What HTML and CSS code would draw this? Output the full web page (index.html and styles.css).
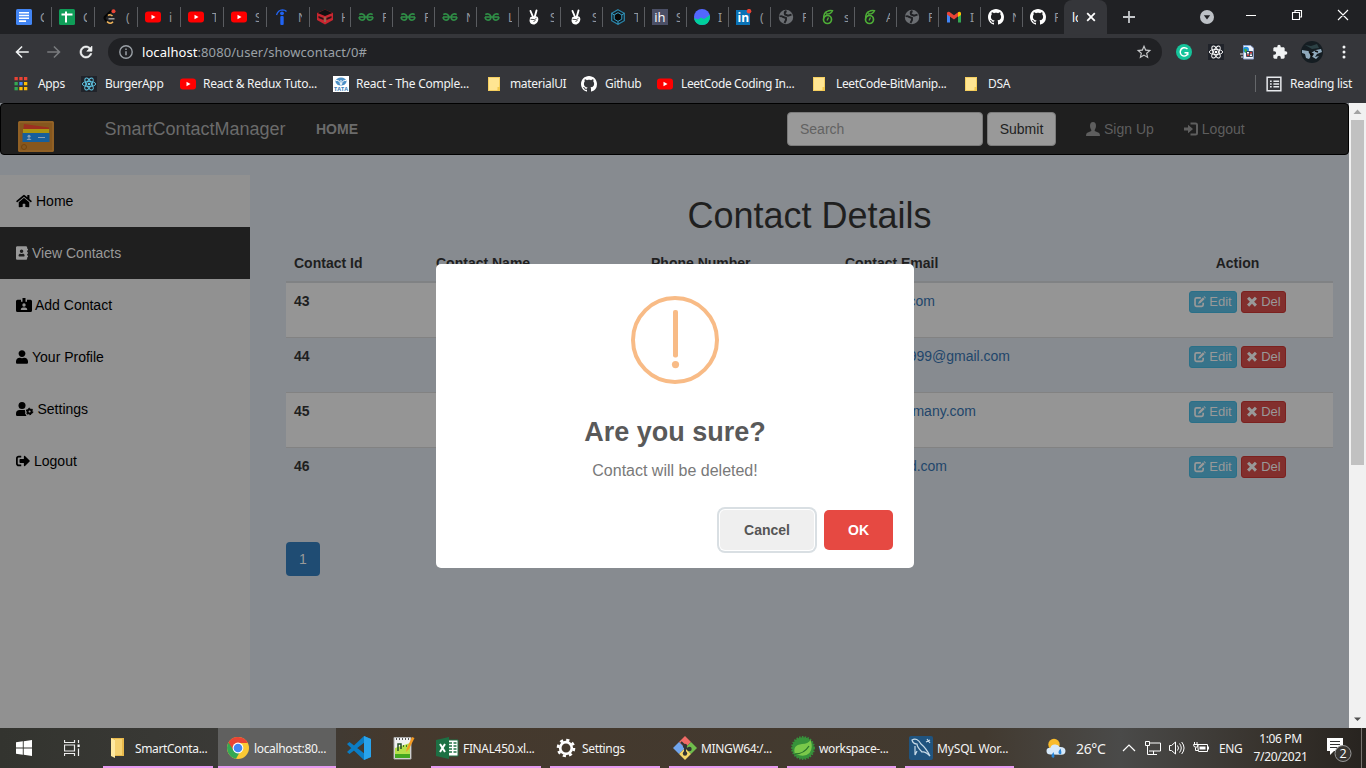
FILE: index.html
```html
<!DOCTYPE html>
<html lang="en">
<head>
<meta charset="utf-8">
<title>Contact Details</title>
<link rel="stylesheet" href="styles.css">
</head>
<body>
<svg class="defs" aria-hidden="true">
  <symbol id="docs" viewBox="0 0 16 16"><rect width="16" height="16" rx="1.5" fill="#4285f4"/><path d="M3 3.7h10M3 6.5h10M3 9.3h10M3 12.1h7" stroke="#fff" stroke-width="1.6"/></symbol>
  <symbol id="sheets" viewBox="0 0 16 16"><rect width="16" height="16" rx="1.5" fill="#0f9d58"/><path d="M2.500 5.600h11M7 2.500v11" stroke="#fff" stroke-width="2"/></symbol>
  <symbol id="leet" viewBox="0 0 16 16"><path d="M9.500 1.500L3.200 7.500Q1.800 9 3.200 10.500L5 13" fill="none" stroke="#050505" stroke-width="2"/><path d="M6 6.500Q8 4.700 10.500 7M5 12.500Q8 16 11 12.700" fill="none" stroke="#f0b45a" stroke-width="1.600"/><path d="M6.500 9.800h6" stroke="#aaa" stroke-width="1.400"/><circle cx="11.500" cy="2.200" r="2" fill="#ea4335"/></symbol>
  <symbol id="yt" viewBox="0 0 16 16"><rect y="2.500" width="16" height="11" rx="3" fill="#f00"/><path d="M6.500 5.700v4.600l4-2.300z" fill="#fff"/></symbol>
  <symbol id="indeed" viewBox="0 0 16 16"><rect x="6.300" y="7" width="3.400" height="9" rx="1" fill="#2164f3"/><circle cx="8" cy="4.300" r="1.900" fill="#2164f3"/><path d="M2.500 6Q4 1 8.500.8q2.500 0 4 1.700" fill="none" stroke="#2164f3" stroke-width="1.300"/></symbol>
  <symbol id="ninja" viewBox="0 0 16 16"><path d="M8 .5L16 4v7l-8 4.500L0 11V4z" fill="#c92630"/><path d="M8 .5L15.500 4 8 7 .5 4z" fill="#111"/><path d="M1.500 7l5 2v2L1.500 9zM14.500 7l-5 2v2l5-2z" fill="#2c1416"/><path d="M8 8v5" stroke="#69a06a"/></symbol>
  <symbol id="gfg" viewBox="0 0 16 16"><path d="M1 8h14" stroke="#2f8d46" stroke-width="1.600"/><path d="M1.300 5.600Q3 4.300 5 5.200q2 1 1.900 3Q6.800 11 4 11.200 1.300 11 1.100 8M14.700 5.600q-1.700-1.300-3.700-.4-2 1-1.900 3 .1 2.800 2.900 3 2.700-.2 2.900-3.200" fill="none" stroke="#2f8d46" stroke-width="1.600"/></symbol>
  <symbol id="hand" viewBox="0 0 16 16"><path d="M4.500 2L7 8M10.500 1.500L8.700 8" stroke="#fff" stroke-width="1.900" stroke-linecap="round"/><path d="M4 8.500Q7 6.500 11 7.500q2 1.500 1 4.500-1 3-3.500 3.500-4 .5-5-3.500z" fill="#fff"/><path d="M4.500 10.300l4 .3 2-1.300M7.500 12.500l2-1" fill="none" stroke="#222" stroke-width=".8"/></symbol>
  <symbol id="hex" viewBox="0 0 16 16"><path d="M8 .7l6.300 3.600v7.400L8 15.300l-6.300-3.600V4.300z" fill="#111b22" stroke="#2a83a7" stroke-width="1.300"/><path d="M8 3.700l3.800 2.200v4.300L8 12.400l-3.800-2.200V5.900zM1.700 4.300l2.500 1.600M14.300 4.300l-2.500 1.600M8 12.400v2.900" fill="#090909" stroke="#3aa0c8"/></symbol>
  <symbol id="ih" viewBox="0 0 16 16"><path d="M0 0h16v16H0z" fill="#4b4f66"/><text x="2.300" y="12.700" class="ico-text" font-size="13" fill="#fff">ih</text></symbol>
  <symbol id="wave" viewBox="0 0 16 16"><circle cx="8" cy="8" r="8" fill="#5367ff"/><path d="M0 9l4 1.500 3-2 3 1.500 6-4Q16.500 16 8 16 1 15.500 0 9z" fill="#00d09c"/></symbol>
  <symbol id="linkedin" viewBox="0 0 16 16"><path d="M0 1h14v15H0z" fill="#0a72b5"/><text x="1.600" y="13.300" class="ico-text" font-weight="bold" font-size="12" fill="#fff">in</text><circle cx="13" cy="2.200" r="2.300" fill="#ea4335"/></symbol>
  <symbol id="globe" viewBox="0 0 16 16"><circle cx="8" cy="8" r="7.200" fill="#6b6e72"/><path d="M1.500 7.500q2-1 3.500.5l3 1v2l-1.500 3M8.500 2Q6 3 7 5.500l3 1.200 3.500-1" fill="none" stroke="#202124" stroke-width="1.900"/></symbol>
  <symbol id="lime" viewBox="0 0 16 16"><circle cx="7.500" cy="10.500" r="4" fill="none" stroke="#4eae37" stroke-width="1.700"/><path d="M3.700 9.500Q3.500 4 7 2.500q2.500-1.500 5.500-.7Q11 5.500 6 5M8.500 8.500L7 11.500" fill="none" stroke="#4eae37" stroke-width="1.400"/></symbol>
  <symbol id="gmail" viewBox="0 0 16 16"><path d="M1 4v9.500h3V7" fill="#4285f4"/><path d="M12 7v6.500h3V4" fill="#34a853"/><path d="M1 3.700Q2 2 3.600 3L8 6.300 12.400 3v4L8 10.400 1 5.500z" fill="#ea4335"/><path d="M12 3.300q2-1.200 3 .7v2l-3 2z" fill="#fbbc04"/></symbol>
  <symbol id="github" viewBox="0 0 16 16"><path fill="#fff" d="M8 0C3.580 0 0 3.580 0 8c0 3.540 2.290 6.530 5.470 7.590.4.070.55-.17.55-.38 0-.19-.01-.82-.01-1.490-2.010.37-2.530-.49-2.690-.94-.09-.23-.48-.94-.82-1.130-.28-.15-.68-.52-.01-.53.63-.01 1.080.58 1.230.82.72 1.210 1.870.87 2.330.66.07-.52.28-.87.51-1.070-1.780-.2-3.640-.89-3.640-3.950 0-.87.31-1.590.82-2.150-.08-.2-.36-1.020.08-2.120 0 0 .67-.21 2.200.82.64-.18 1.320-.27 2-.27s1.360.09 2 .27c1.530-1.040 2.200-.82 2.200-.82.44 1.100.16 1.920.08 2.120.51.56.82 1.270.82 2.150 0 3.070-1.870 3.750-3.650 3.950.29.25.54.73.54 1.480 0 1.070-.01 1.930-.01 2.200 0 .21.15.46.55.38A8.010 8.010 0 0016 8c0-4.420-3.580-8-8-8z"/></symbol>
  <symbol id="react" viewBox="0 0 16 16"><path d="M0 0h16v16H0z" fill="#20232a"/><g fill="none" stroke="currentColor" stroke-width=".9"><ellipse cx="8" cy="8" rx="6.700" ry="2.600"/><ellipse cx="8" cy="8" rx="6.700" ry="2.600" transform="rotate(60 8 8)"/><ellipse cx="8" cy="8" rx="6.700" ry="2.600" transform="rotate(120 8 8)"/></g><circle cx="8" cy="8" r="1.300" fill="currentColor"/></symbol>
  <symbol id="folder" viewBox="0 0 16 16"><path d="M1 1h12v14H1z" fill="#f5cf60"/><path d="M2 2h10v9l-1.500 3H2z" fill="#ffe592"/><path d="M10.500 11h2.500v4h-2.500z" fill="#f2c94e"/></symbol>
  <symbol id="edit" viewBox="0 0 14 14"><path d="M8 2.200H3Q1.200 2.200 1.200 4v6.300q0 1.700 1.800 1.700h6q1.700 0 1.700-1.700V8" fill="none" stroke="currentColor" stroke-width="2"/><path d="M10.500 1.500l2 2-4.800 4.800-3 1 1-3zM11.200.8l.7-.7 2 2-.7.7z" fill="currentColor"/></symbol>
  <symbol id="cross" viewBox="0 0 14 14"><path d="M3.700.8L7 4.100 10.300.8l2.500 2.500L9.500 6.600l3.300 3.300-2.500 2.500L7 9.100l-3.300 3.300-2.500-2.500 3.300-3.300L1.200 3.300z" fill="currentColor"/></symbol>
</svg>

<header class="tabs">
  <div class="tab w43"><svg><use href="#docs"/></svg><span>C</span></div>
  <div class="tab w43"><svg><use href="#sheets"/></svg><span>C</span></div>
  <div class="tab w43"><svg><use href="#leet"/></svg><span>(</span></div>
  <div class="tab w43"><svg><use href="#yt"/></svg><span>i</span></div>
  <div class="tab w43"><svg><use href="#yt"/></svg><span>T</span></div>
  <div class="tab w43"><svg><use href="#yt"/></svg><span>S</span></div>
  <div class="tab w43"><svg><use href="#indeed"/></svg><span>N</span></div>
  <div class="tab w41"><svg><use href="#ninja"/></svg><span>H</span></div>
  <div class="tab"><svg><use href="#gfg"/></svg><span>F</span></div>
  <div class="tab"><svg><use href="#gfg"/></svg><span>F</span></div>
  <div class="tab"><svg><use href="#gfg"/></svg><span>N</span></div>
  <div class="tab"><svg><use href="#gfg"/></svg><span>L</span></div>
  <div class="tab"><svg><use href="#hand"/></svg><span>S</span></div>
  <div class="tab"><svg><use href="#hand"/></svg><span>S</span></div>
  <div class="tab"><svg><use href="#hex"/></svg><span>T</span></div>
  <div class="tab"><svg><use href="#ih"/></svg><span>S</span></div>
  <div class="tab"><svg><use href="#wave"/></svg><span>I</span></div>
  <div class="tab"><svg><use href="#linkedin"/></svg><span>(</span></div>
  <div class="tab"><svg><use href="#globe"/></svg><span>F</span></div>
  <div class="tab"><svg><use href="#lime"/></svg><span>s</span></div>
  <div class="tab"><svg><use href="#lime"/></svg><span>A</span></div>
  <div class="tab"><svg><use href="#globe"/></svg><span>F</span></div>
  <div class="tab"><svg><use href="#gmail"/></svg><span>I</span></div>
  <div class="tab"><svg><use href="#github"/></svg><span>N</span></div>
  <div class="tab last"><svg><use href="#github"/></svg><span>F</span></div>
  <div class="tab-active"><span>lo</span><svg viewBox="0 0 10 10"><path d="M1.200 1.200l7.600 7.600M8.800 1.200l-7.600 7.600" stroke="#fff" stroke-width="1.800"/></svg></div>
  <svg class="new-tab" viewBox="0 0 14 14"><path d="M7 1v12M1 7h12" stroke="#c4c7ca" stroke-width="1.800"/></svg>
  <svg class="tab-search" viewBox="0 0 14 14"><circle cx="7" cy="7" r="7" fill="#bdc1c6"/><path d="M3.800 5.300h6.400L7 9.500z" fill="#202124"/></svg>
  <svg class="win-buttons" viewBox="0 0 110 14"><path d="M0 7.500h10M92 2l10 10M102 2L92 12M46.500 4.500h7v7h-7zM49 4V2.500h6.500V9H54" fill="none" stroke="#fff" stroke-width="1.100"/></svg>
</header>

<div class="toolbar">
  <svg viewBox="0 0 24 24"><path fill="#f1f3f4" d="M21 11H7.200l5.600-5.600L11.400 4l-8.200 8 8.200 8 1.400-1.400L7.200 13H21z"/></svg>
  <svg viewBox="0 0 24 24"><path fill="#797b7e" d="M3 11h13.800l-5.600-5.600L12.600 4l8.200 8-8.200 8-1.400-1.400 5.600-5.600H3z"/></svg>
  <svg viewBox="0 0 24 24"><path fill="#f1f3f4" stroke="#f1f3f4" stroke-width=".8" d="M17.650 6.350C16.200 4.900 14.210 4 12 4c-4.420 0-7.990 3.580-7.990 8s3.570 8 7.990 8c3.730 0 6.840-2.550 7.730-6h-2.080c-.82 2.330-3.040 4-5.650 4-3.310 0-6-2.690-6-6s2.690-6 6-6c1.660 0 3.140.69 4.220 1.780L13 11h7V4z"/></svg>
  <div class="omnibox">
    <svg viewBox="0 0 14 14"><circle cx="7" cy="7" r="6.200" fill="none" stroke="#9aa0a6" stroke-width="1.400"/><path d="M7 6.200v4M7 3.500v1.500" stroke="#9aa0a6" stroke-width="1.500"/></svg>
    <p class="url"><b>localhost</b>:8080/user/showcontact/0#</p>
    <svg class="star" viewBox="1 1 22 22"><path fill="#c6c8ca" d="M22 9.240l-7.190-.62L12 2 9.190 8.630 2 9.240l5.460 4.730L5.820 21 12 17.270 18.180 21l-1.630-7.030zM12 15.400l-3.760 2.270 1-4.280-3.320-2.880 4.380-.38L12 6.100l1.710 4.040 4.380.38-3.320 2.880 1 4.280z"/></svg>
  </div>
  <div class="extensions">
    <svg viewBox="0 0 16 16"><circle cx="8" cy="8" r="8" fill="#15c39a"/><path d="M11.500 5Q9.800 3.300 7.500 3.800 4.500 4.500 4.200 8q.3 3.600 3.800 4.100 3.400-.2 3.800-3.300H8.500M11.800 8.800v2.500" fill="none" stroke="#fff" stroke-width="1.400"/></svg>
    <svg class="white"><use href="#react"/></svg>
    <svg viewBox="0 0 16 16"><path d="M3.500 1.500h7l3 2.500v11h-10z" fill="#eef3fb" stroke="#8fa3cf"/><circle cx="6" cy="5.800" r="3" fill="#228ee0"/><path d="M4 4.500l3 1v3H5z" fill="#45ae36"/><path d="M6.500 7.500h6v5h-6zM9.500 7.500v5M6.500 10h6" fill="#fff" stroke="#25354a" stroke-width=".9"/><path d="M7 12h2.200v-1.500H7zM10 9.500h2V8h-2z" fill="#c33"/><path d="M0 10h3M1 13h2" stroke="#ddd"/></svg>
    <svg viewBox="0 0 24 24"><path fill="#f1f3f4" d="M20.500 11H19V7c0-1.100-.9-2-2-2h-4V3.500a2.500 2.500 0 0 0-5 0V5H4c-1.100 0-2 .9-2 2v3.800h1.500a2.700 2.700 0 0 1 0 5.400H2V20c0 1.100.9 2 2 2h3.800v-1.500a2.700 2.700 0 0 1 5.400 0V22H17c1.100 0 2-.9 2-2v-4h1.500a2.500 2.500 0 0 0 0-5z"/></svg>
    <svg class="avatar" viewBox="0 0 22 22"><circle cx="11" cy="11" r="11" fill="#151d22"/><path d="M1 9l6 1 3 2 5-3 5-1 1 3-5 2-2 3 4-1-3 3-5-3-2 3-3-1-1-4-3-1z" fill="#8fa9bc"/><path d="M4 4l6 1 6-2 2 4-7 1z" fill="#2c4145"/><path d="M8 11l4 2-2 3M14 10l3 1" stroke="#111" stroke-width="1.500"/></svg>
    <svg viewBox="0 0 16 16"><g fill="#f1f3f4"><circle cx="8" cy="3" r="1.500"/><circle cx="8" cy="8" r="1.500"/><circle cx="8" cy="13" r="1.500"/></g></svg>
  </div>
</div>

<nav class="bookmarks">
  <a><svg viewBox="0 0 14 14"><path d="M.5 0h3.300v3.300H.5zM5.300 0h3.300v3.300H5.300zM10 0h3.300v3.300H10z" fill="#ea4335"/><path d="M.5 5h3.300v3.300H.5z" fill="#34a853"/><path d="M5.300 5h3.300v3.300H5.300z" fill="#4285f4"/><path d="M10 5h3.300v3.300H10zM5.300 10h3.300v3.300H5.300zM10 10h3.300v3.300H10z" fill="#fbbc04"/><path d="M.5 10h3.300v3.300H.5z" fill="#34a853"/></svg>Apps</a>
  <a><svg class="cyan"><use href="#react"/></svg>BurgerApp</a>
  <a class="wider"><svg><use href="#yt"/></svg>React &amp; Redux Tuto...</a>
  <a class="wider"><svg viewBox="0 0 16 16"><path d="M0 0h16v16H0z" fill="#fff"/><ellipse cx="8" cy="5.500" rx="5.500" ry="4" fill="#4c90c6"/><path d="M8 9V4M3 4.500q4-.5 4.500 4M13 4.500q-4-.5-4.500 4" fill="none" stroke="#fff"/><text x="1" y="15.300" class="ico-text" font-weight="bold" font-size="5.500" fill="#3980b8">TATA</text></svg>React - The Comple...</a>
  <a class="mui"><svg><use href="#folder"/></svg>materialUI</a>
  <a><svg><use href="#github"/></svg>Github</a>
  <a><svg><use href="#yt"/></svg>LeetCode Coding In...</a>
  <a><svg><use href="#folder"/></svg>LeetCode-BitManip...</a>
  <a><svg><use href="#folder"/></svg>DSA</a>
  <a class="reading"><svg viewBox="0 0 14 14"><path d="M1 1h12v12H1zM3.500 4.500H5M6.500 4.500h5M3.500 7H5M6.500 7h5M3.500 9.500H5M6.500 9.500h5" fill="none" stroke="#e8eaed" stroke-width="1.300"/></svg>Reading list</a>
</nav>

<div class="viewport">
  <div class="page">
    <nav class="navbar">
      <svg class="brand-icon" viewBox="0 0 36 31"><rect width="36" height="31" rx="1.500" fill="#86571e"/><path d="M1 1h34v29H1z" fill="none" stroke="#9a6a2c"/><path d="M6 3l25 3.500V12H5z" fill="#9c3020"/><path d="M5 8h26v6H5z" fill="#a99511"/><path d="M4.500 12h27v9h-27z" fill="#165f9c"/><path d="M20 16.500h7" stroke="#8aa0b4"/><circle cx="11" cy="15.200" r="1.500" fill="#8aa0b4"/><path d="M8.500 19q2.500-3.500 5 0z" fill="#8aa0b4"/><circle cx="6" cy="26" r="2.500" fill="none" stroke="#71430f"/></svg>
      <span class="brand">SmartContactManager</span>
      <b class="home">HOME</b>
      <span class="search">Search</span>
      <span class="submit">Submit</span>
      <span class="nav-link"><svg viewBox="0 0 14 14"><path d="M7 0c2 0 3 1.500 3 3.700 0 2-.8 3.500-1.300 4.200v1.200l4 1.600q1.300.6 1.300 3.300H0q0-2.700 1.300-3.300l4-1.600V7.900C4.800 7.200 4 5.700 4 3.700 4 1.500 5 0 7 0z" fill="currentColor"/></svg>Sign Up</span>
      <span class="nav-link"><svg viewBox="0 0 14 14"><path d="M6.500 1.500h5Q13 1.500 13 3v8q0 1.500-1.500 1.500h-5" fill="none" stroke="currentColor" stroke-width="2"/><path d="M0 5.500h4V2.800L9 7l-5 4.200V8.500H0z" fill="currentColor"/></svg>Logout</span>
    </nav>

    <div class="columns">
      <aside class="sidebar">
        <a><svg width="16" height="14" viewBox="0 0 576 512"><path d="M280.370 148.260L96 300.110V464a16 16 0 0 0 16 16l112.060-.29a16 16 0 0 0 15.920-16V368a16 16 0 0 1 16-16h64a16 16 0 0 1 16 16v95.640a16 16 0 0 0 16 16.050L464 480a16 16 0 0 0 16-16V300L295.670 148.260a12.190 12.190 0 0 0-15.300 0zM571.600 251.470L488 182.560V44.050a12 12 0 0 0-12-12h-56a12 12 0 0 0-12 12v72.610L318.470 43a48 48 0 0 0-61 0L4.340 251.470a12 12 0 0 0-1.600 16.900l25.500 31A12 12 0 0 0 45.150 301l235.220-193.740a12.190 12.190 0 0 1 15.300 0L530.900 301a12 12 0 0 0 16.900-1.600l25.500-31a12 12 0 0 0-1.700-16.930z"/></svg>Home</a>
        <a class="active"><svg width="12" height="14" viewBox="0 0 448 512"><path d="M436 160c6.600 0 12-5.400 12-12v-40c0-6.600-5.400-12-12-12h-20V48c0-26.500-21.500-48-48-48H48C21.500 0 0 21.500 0 48v416c0 26.500 21.500 48 48 48h320c26.500 0 48-21.500 48-48v-48h20c6.600 0 12-5.400 12-12v-40c0-6.600-5.400-12-12-12h-20v-64h20c6.600 0 12-5.400 12-12v-40c0-6.600-5.400-12-12-12h-20v-64h20zm-228-32c35.300 0 64 28.700 64 64s-28.700 64-64 64-64-28.700-64-64 28.700-64 64-64zm112 236.800c0 10.600-10 19.200-22.400 19.200H118.400C106 384 96 375.400 96 364.800v-19.200c0-31.800 30.100-57.600 67.200-57.600h5c12.300 5.100 25.700 8 39.800 8s27.600-2.900 39.800-8h5c37.100 0 67.200 25.800 67.200 57.600v19.200z"/></svg>View Contacts</a>
        <a><svg class="tight" width="16" height="14" viewBox="0 0 16 14"><path fill-rule="evenodd" d="M1.500 1.700H5v2h1.500V0h3v3.700H11v-2h3.500Q16 1.700 16 3.200v9.300q0 1.500-1.500 1.500h-13Q0 14 0 12.500V3.200q0-1.500 1.500-1.500zM8 5.300a1.700 1.700 0 1 0 0 3.400 1.700 1.700 0 0 0 0-3.400zM4.700 12h6.600q0-2.500-2-2.500H6.700q-2 0-2 2.500z"/></svg>Add Contact</a>
        <a><svg width="12" height="14" viewBox="0 0 448 512"><path d="M224 256c70.700 0 128-57.300 128-128S294.700 0 224 0 96 57.300 96 128s57.300 128 128 128zm89.600 32h-16.700c-22.200 10.200-46.900 16-72.900 16s-50.600-5.800-72.900-16h-16.700C60.200 288 0 348.200 0 422.400V464c0 26.500 21.500 48 48 48h352c26.500 0 48-21.500 48-48v-41.600c0-74.200-60.200-134.400-134.400-134.400z"/></svg>Your Profile</a>
        <a><svg width="17.500" height="14" viewBox="0 0 17.500 14"><circle cx="6" cy="3.500" r="3.500"/><path d="M3.700 8h5.400q-.6 1 .2 2-.8 1.800.8 3l.3 1H1.300Q0 14 0 12.700v-1Q0 8 3.700 8z"/><circle cx="13.600" cy="9.500" r="2" fill="none" stroke="#000" stroke-width="1.900"/><circle cx="13.600" cy="9.500" r="3.200" fill="none" stroke="#000" stroke-width="1.100" stroke-dasharray="1.700 1.650"/></svg>Settings</a>
        <a><svg width="14" height="14" viewBox="0 0 512 512"><path d="M497 273L329 441c-15 15-41 4.500-41-17v-96H152c-13.300 0-24-10.700-24-24v-96c0-13.300 10.700-24 24-24h136V88c0-21.400 25.900-32 41-17l168 168c9.300 9.400 9.300 24.600 0 34zM192 436v-40c0-6.600-5.400-12-12-12H96c-17.700 0-32-14.300-32-32V160c0-17.700 14.300-32 32-32h84c6.600 0 12-5.400 12-12V76c0-6.600-5.400-12-12-12H96c-53 0-96 43-96 96v192c0 53 43 96 96 96h84c6.600 0 12-5.400 12-12z"/></svg>Logout</a>
      </aside>
      <main class="content">
        <h1>Contact Details</h1>
        <div class="row head"><b>Contact Id</b><b>Contact Name</b><b>Phone Number</b><b>Contact Email</b><b class="action">Action</b></div>
        <div class="row odd"><b>43</b><i></i><i></i><span><a class="email e1">.com</a></span><span class="action"><em><svg><use href="#edit"/></svg>Edit</em><em class="del"><svg><use href="#cross"/></svg>Del</em></span></div>
        <div class="row"><b>44</b><i></i><i></i><span><a class="email e2">999@gmail.com</a></span><span class="action"><em><svg><use href="#edit"/></svg>Edit</em><em class="del"><svg><use href="#cross"/></svg>Del</em></span></div>
        <div class="row odd"><b>45</b><i></i><i></i><span><a class="email e3">many.com</a></span><span class="action"><em><svg><use href="#edit"/></svg>Edit</em><em class="del"><svg><use href="#cross"/></svg>Del</em></span></div>
        <div class="row end"><b>46</b><i></i><i></i><span><a class="email e4">d.com</a></span><span class="action"><em><svg><use href="#edit"/></svg>Edit</em><em class="del"><svg><use href="#cross"/></svg>Del</em></span></div>
        <div class="pager">1</div>
      </main>
    </div>

    <section class="modal">
      <svg class="warn" viewBox="0 0 88 88"><circle cx="44" cy="44" r="42" fill="none" stroke="#f8bb86" stroke-width="4"/><rect x="42" y="14" width="5" height="47.500" rx="2" fill="#f8bb86"/><circle cx="44.500" cy="68.600" r="3.600" fill="#f8bb86"/></svg>
      <h2>Are you sure?</h2>
      <p>Contact will be deleted!</p>
      <div class="modal-actions"><span class="cancel">Cancel</span><span class="ok">OK</span></div>
    </section>
  </div>
  <div class="scrollbar">
    <svg viewBox="0 0 17 17"><path d="M4.500 11h8l-4-4.500z" fill="#a3a3a3"/></svg>
    <div class="thumb"></div>
    <svg class="down" viewBox="0 0 17 17"><path d="M5 6.500h7L8.500 10z" fill="#505050"/></svg>
  </div>
</div>

<footer class="taskbar">
  <div class="task start"><svg class="s16" viewBox="0 0 16 16"><path d="M0 2.300l6.800-1v6.300H0zM7.700 1.200L16 0v7.600H7.700zM0 8.500h6.800v6.300L0 13.800zM7.700 8.500H16V16l-8.300-1.200z" fill="#fff"/></svg></div>
  <div class="task view"><svg class="s16" viewBox="0 0 16 16"><path d="M.5 0v2.500h10V0M.5 5h10v6h-10zM.5 16v-2.500h10V16M14.500 0v3M14.500 8.500V16" fill="none" stroke="#eee" stroke-width="1.200"/><path d="M13.500 4.500h2.200v2.500h-2.200z" fill="#fff"/></svg></div>
  <div class="task open folder-task"><i><svg viewBox="0 0 24 24"><path d="M6 2h13v18H6z" fill="#e8b94c"/><path d="M6 2l4 2v18l-4-2z" fill="#ffe9a0"/><path d="M10 3h7v16h-7z" fill="#f6d271"/></svg></i>SmartConta...</div>
  <div class="task open current"><i><svg viewBox="0 0 24 24"><circle cx="12" cy="12" r="11" fill="#fbc934"/><path d="M12 12L2.500 6.500A11 11 0 0 0 10 22.800l5-8.800z" fill="#34a853"/><path d="M2.500 6.500A11 11 0 0 1 21.700 7H12a5 5 0 0 0-4.500 7.500z" fill="#e84435"/><circle cx="12" cy="12" r="5.400" fill="#fff"/><circle cx="12" cy="12" r="4.300" fill="#4285f4"/></svg></i>localhost:80...</div>
  <div class="task pinned"><svg viewBox="0 0 24 24"><path d="M17 0l7 3v18l-7 3L1.500 9.500 0 8l2.500-2L18 18V6L2.500 18 0 16z" fill="#0b7dc5"/><path d="M17 0l7 3v18l-7 3z" fill="#29a3ec"/></svg></div>
  <div class="task pinned npp"><svg viewBox="0 0 24 24"><path d="M3 1.500h17V23H3z" fill="#f2f2f2" stroke="#aaa"/><path d="M4 12l15-5v15H4z" fill="#b5e04a"/><path d="M4 18h15v4H4z" fill="#43a720"/><path d="M5 3h1M8 3h1M11 3h1M14 3h1M17 3h1" stroke="#555" stroke-width="2"/><path d="M7 15V8h3v5M12 10h1M15 10h1" fill="none" stroke="#244b25" stroke-width="1.500"/><path d="M15 16l1-4 5-11 2.500 1-5.500 11z" fill="#f39a24"/></svg></div>
  <div class="task open"><i><svg viewBox="0 0 24 24"><path d="M11 4h12v16H11z" fill="#fff" stroke="#217346"/><path d="M14 7h3M18.500 7h3M14 10h3M18.500 10h3M14 13h3M18.500 13h3M14 16h3M18.500 16h3" stroke="#217346" stroke-width="1.700"/><path d="M1 4l13-3v22L1 20z" fill="#1d7044"/><path d="M5 8l5 8M10 8l-5 8" stroke="#fff" stroke-width="2"/></svg></i>FINAL450.xl...</div>
  <div class="task open"><i><svg viewBox="0 0 24 24"><circle cx="12" cy="12" r="5.800" fill="none" stroke="#fff" stroke-width="2.700"/><circle cx="12" cy="12" r="8" fill="none" stroke="#fff" stroke-width="2.600" stroke-dasharray="3.140 3.140"/></svg></i>Settings</div>
  <div class="task open git-task"><i><svg viewBox="0 0 24 24"><path d="M12 0l6 6-6 6-6-6z" fill="#f06b66"/><path d="M18 6l6 6-6 6-6-6z" fill="#70bd4c"/><path d="M6 6l6 6-6 6-6-6z" fill="#71a5ed"/><path d="M12 12l6 6-6 6-6-6z" fill="#f5d568"/><path d="M8 6l4 4v8M12 11l4 3" fill="none" stroke="#343434" stroke-width="2"/><g fill="#343434"><circle cx="12" cy="10" r="2.200"/><circle cx="12" cy="17.500" r="2.200"/><circle cx="16.500" cy="13" r="2.200"/></g></svg></i>MINGW64:/...</div>
  <div class="task open spring-task"><i><svg viewBox="0 0 24 24"><circle cx="12" cy="12" r="10.800" fill="#37923a"/><circle cx="12" cy="12" r="11" fill="none" stroke="#37913c" stroke-width="2" stroke-dasharray="1.500 1.300"/><path d="M4 18Q1 9 11 8q6 0 8.500-4 3 8-1 13-5 5-14 1z" fill="#7ac84a"/><path d="M4 18q9 0 14-8" fill="none" stroke="#28742b" stroke-width="1.300"/></svg></i>workspace-...</div>
  <div class="task open mysql-task"><i><svg viewBox="0 0 24 24"><rect width="24" height="24" rx="2" fill="#20547f"/><path d="M3 4q5-3 9 4 5 4 9 12-5-5-8-4-5-5-5-8Q4 8 3 4zM6 10v9l2-4M18 3l3 4M17 6l4-2" fill="none" stroke="#c8dbe8" stroke-width="1.200"/></svg></i>MySQL Wor...</div>
  <div class="tray">
    <svg class="weather" viewBox="0 0 24 24"><circle cx="10" cy="8.500" r="5.700" fill="#f9bb2b"/><path d="M6.500 18.500q-4 0-4-3.500t4-3.300q1-3.700 5-3.200 3 .2 4 2.500 5.500-.5 6 3.700 0 4-4 4z" fill="#d7e9fa"/><path d="M9.500 16q-3.500 4.500-1 5.500t1.700-3zM16.500 12.500q-3.500 4.500-1 5.500t1.700-3z" fill="#2887db"/></svg>
    <span class="temp">26°C</span>
    <svg viewBox="0 0 16 16"><path d="M2 11l6-6 6 6" fill="none" stroke="#fff" stroke-width="1.200"/></svg>
    <svg viewBox="0 0 16 16"><path d="M5 3h10.500v8H4M8.500 11v3.500M5 14.500h7M.5 1.500h4v4h-4zM2.500 5.500v9H5" fill="none" stroke="#fff"/></svg>
    <svg viewBox="0 0 16 16"><path d="M.5 5.500h2l4-3.500v12l-4-3.500h-2zM8.500 5.500q2 2.500 0 5M10.500 3.500q3.500 4.500 0 9M12.700 2q4.700 6 0 12" fill="none" stroke="#fff"/></svg>
    <svg viewBox="0 0 16 16"><path d="M4.500 4.500h10v7h-9zM15.500 6.500v3M1.500 2v2.500M4 2v2.500M.5 4.500H5v2Q3 8 1 6.500zM2.500 7.500v3H5" fill="none" stroke="#fff"/><path d="M6.500 6.500h6v3h-6z" fill="#fff"/></svg>
    <span class="lang">ENG</span>
    <span class="clock"><span>1:06 PM</span><span>7/20/2021</span></span>
    <svg class="notice" viewBox="0 0 26 26"><path d="M1 1h16v13H8l-4 4v-4H1z" fill="#fff"/><path d="M4 4.500h10M4 7.500h10M4 10.500h7" stroke="#333" stroke-width="1.200"/><circle cx="17" cy="16.500" r="8" fill="#393632" stroke="#999"/><text x="13.500" y="21" class="ico-text" font-size="12.500" fill="#fff">2</text></svg>
    <b class="peek"></b>
  </div>
</footer>
</body>
</html>
```

FILE: styles.css
```css
* { box-sizing: border-box; }
body { margin: 0; width: 1366px; height: 768px; overflow: hidden; display: flex; flex-direction: column; background: #35363a; font: 12px "Noto Sans", "Open Sans", sans-serif; }
svg { display: block; flex: none; }
.defs { position: absolute; width: 0; height: 0; }
.ico-text { font-family: "Open Sans", sans-serif; letter-spacing: 0; }

/* Browser tabs */
.tabs { height: 34px; flex: none; background: #202124; display: flex; align-items: center; padding-left: 9px; }
.tab { position: relative; width: 42px; height: 34px; flex: none; display: flex; align-items: center; padding-left: 7px; color: #94979c; }
.tab::after { content: ""; position: absolute; right: 0; top: 7px; width: 1px; height: 20px; background: #5a5c60; }
.tab.last { width: 41px; }
.tab.last::after { display: none; }
.w43 { width: 43px; }
.w41 { width: 41px; }
.tab svg { width: 16px; height: 16px; }
.tab span { width: 4px; margin-left: 8px; overflow: hidden; }
.tab-active { width: 43px; height: 34px; flex: none; background: #35363a; border-radius: 8px 8px 0 0; display: flex; align-items: center; padding-left: 8px; color: #fff; }
.tab-active span { width: 6px; overflow: hidden; margin-right: 8px; }
.tab-active svg { width: 10px; height: 10px; }
.new-tab { width: 14px; height: 14px; margin-left: 15px; }
.tab-search { width: 14px; height: 14px; margin-left: 64px; }
.win-buttons { width: 110px; height: 14px; margin: -5px 0 0 32px; }

/* Toolbar */
.toolbar { height: 36px; flex: none; display: flex; align-items: center; padding-left: 13px; }
.toolbar > svg { width: 18px; height: 18px; margin-right: 14px; }
.omnibox { width: 1054px; height: 28px; margin-left: -1px; border-radius: 14px; background: #202124; display: flex; align-items: center; padding: 0 10px 0 11px; }
.omnibox svg { width: 14px; height: 14px; }
.omnibox .star { width: 16px; height: 16px; margin-left: auto; }
.url { margin: 0 0 0 9px; color: #9aa0a6; font-size: 13px; letter-spacing: .07px; }
.url b { color: #fff; font-weight: 400; }
.extensions { display: grid; grid-template-columns: 32px 32px 32px 32px 32px 16px; align-items: center; margin-left: 14px; }
.extensions svg { width: 16px; height: 16px; }
.extensions .avatar { width: 22px; height: 22px; margin-left: -3px; }
.white { color: #fff; }
.cyan { color: #61c9e8; }

/* Bookmarks */
.bookmarks { height: 33px; flex: none; display: grid; grid-template-columns: 67px 99px 153px 154px 94px 76px 155px 152px 291px 112px; padding: 0 0 6px 14px; align-items: center; color: #f1f3f4; letter-spacing: -.35px; }
.bookmarks a { display: flex; align-items: center; white-space: nowrap; }
.bookmarks svg { width: 16px; height: 16px; margin-right: 8px; }
.bookmarks a:first-child svg { width: 14px; height: 14px; margin-right: 10px; }
.bookmarks .wider { letter-spacing: -.25px; }
.bookmarks .wider svg { margin-right: 7px; }
.bookmarks .mui svg { margin-right: 7px; }
.reading { border-left: 1px solid #65676a; padding-left: 10px; letter-spacing: -.3px; }
.bookmarks .reading svg { width: 16px; height: 16px; }

/* Web page */
.viewport { height: 625px; flex: none; display: flex; font-family: "Liberation Sans", Arial, sans-serif; font-size: 14px; }
.page { position: relative; width: 1349px; background: #878b90; color: #1f1f1f; }
.navbar { height: 52px; background: #1f1f1f; border: 1px solid #000; border-radius: 4px; display: flex; align-items: center; color: #5e5e5e; padding-left: 17px; }
.brand-icon { width: 36px; height: 31px; margin-top: 15px; }
.brand { width: 181px; margin-left: 50.500px; font-size: 18px; color: #6b6b6b; }
.home { width: 42px; margin-left: 30.500px; color: #6b6b6b; }
.search { width: 196px; height: 34px; margin-left: 429px; border: 1px solid #7a7a7a; border-radius: 4px; background: #999; padding: 0 12px; line-height: 32px; color: #626262; }
.submit { width: 69px; height: 34px; margin-left: 4px; border: 1px solid #7a7a7a; border-radius: 4px; background: #999; text-align: center; line-height: 32px; color: #1f1f1f; }
.nav-link { display: flex; align-items: center; margin-left: 30px; }
.nav-link svg { width: 14px; height: 14px; margin-right: 4px; }
.columns { display: flex; margin-top: 20px; }
.sidebar { width: 250px; height: 553px; background: #919191; flex: none; color: #000; }
.sidebar a { height: 52px; padding-left: 16px; display: flex; align-items: center; }
.sidebar svg { margin-right: 4px; fill: currentColor; }
.sidebar .tight { margin-right: 3px; }
.sidebar .active { background: #1f1f1f; color: #999; }
.content { width: 1047px; margin-left: 36px; }
h1 { margin: 21px 0 9px; font-weight: 500; font-size: 36px; line-height: 40px; text-align: center; }
.row { height: 55px; display: grid; grid-template-columns: 142px 215px 194px 305px 191px; padding-top: 8px; line-height: 20px; border-bottom: 1px solid #828282; }
.row > * { padding-left: 8px; }
.head { height: 38px; border-bottom: 2px solid #808284; }
.odd { background: #959595; }
.end { border: 0; }
.email { display: block; text-align: right; color: #1f466b; }
.e1 { width: 90px; }
.e2 { width: 165px; }
.e3 { width: 131px; }
.e4 { width: 102px; }
.row .action { padding: 0; display: flex; justify-content: center; gap: 4px; }
.action em { width: 48px; height: 22px; border: 1px solid #2a7088; border-radius: 3px; background: #37738a; color: #999; font-style: normal; font-size: 13px; display: flex; align-items: center; justify-content: center; }
.action .del { width: 45px; background: #822f2d; border-color: #7b211f; }
.action svg { width: 12px; height: 12px; margin-right: 3px; }
.pager { width: 34px; height: 34px; margin-top: 39px; border-radius: 4px; background: #1f4c73; color: #999; text-align: center; line-height: 34px; }

/* Confirmation dialog */
.modal { position: absolute; left: 436px; top: 161px; width: 478px; height: 304px; border-radius: 5px; background: #fff; text-align: center; color: #595959; }
.warn { width: 88px; height: 88px; margin: 32px auto 0; }
.modal h2 { margin: 30px 0 0; font-size: 27px; line-height: 36px; }
.modal p { margin: 10px 0 0; font-size: 16px; line-height: 22px; color: #797979; }
.modal-actions { display: flex; justify-content: flex-end; gap: 10px; margin-top: 28px; padding-right: 21px; font-weight: bold; line-height: 40px; }
.cancel { width: 94px; height: 40px; border-radius: 5px; background: #efefef; color: #555; box-shadow: 0 0 0 1px #fff, 0 0 0 3px #d9dfe3; }
.ok { width: 69px; height: 40px; border-radius: 5px; background: #e64942; color: #fff; }

.scrollbar { width: 17px; background: #f1f1f1; display: flex; flex-direction: column; }
.scrollbar svg { width: 17px; height: 17px; }
.thumb { width: 13px; height: 345px; margin-left: 2px; background: #c1c1c1; }
.scrollbar .down { margin-top: auto; }

/* Taskbar */
.taskbar { height: 40px; flex: none; display: flex; color: #f4f4f4; background: linear-gradient(90deg, #33342f, #3c3b38 20%, #45392d 29%, #423a30 72%, #4a4a49 82%, #37322c 93%, #27231f); letter-spacing: -.35px; }
.task { height: 40px; flex: none; display: flex; align-items: center; white-space: nowrap; }
.task svg { width: 24px; height: 24px; }
.task .s16 { width: 16px; height: 16px; }
.start { width: 48px; padding-left: 16px; }
.view { width: 55px; padding-left: 16px; }
.open { width: 110px; margin-right: 9px; border-bottom: 2px solid #e69af0; padding-top: 2px; }
.open i { width: 32px; display: flex; justify-content: center; font-style: normal; }
.folder-task { margin-right: 5px; }
.folder-task i { padding-right: 4px; }
.current { width: 118px; margin-right: 0; padding-left: 4px; background: #60605f; }
.pinned { width: 44px; padding-left: 11px; }
.npp { width: 51px; }
.git-task, .spring-task, .mysql-task { width: 109px; }
.mysql-task { margin-right: 0; letter-spacing: -.15px; }
.tray { display: grid; grid-template-columns: 32px 45px 24px 24px 24px 26px 33px 60px 15px 37px 1px; margin-left: 30px; align-items: center; }
.tray svg { width: 16px; height: 16px; }
.tray .weather { width: 24px; height: 24px; }
.temp { font-size: 14px; }
.clock { display: flex; flex-direction: column; text-align: center; line-height: 18px; margin-left: -3px; }
.tray .notice { grid-column: 10; width: 26px; height: 26px; margin: 4px 0 0 -1px; }
.peek { width: 1px; height: 40px; background: #77736f; margin-left: -3px; }
```
